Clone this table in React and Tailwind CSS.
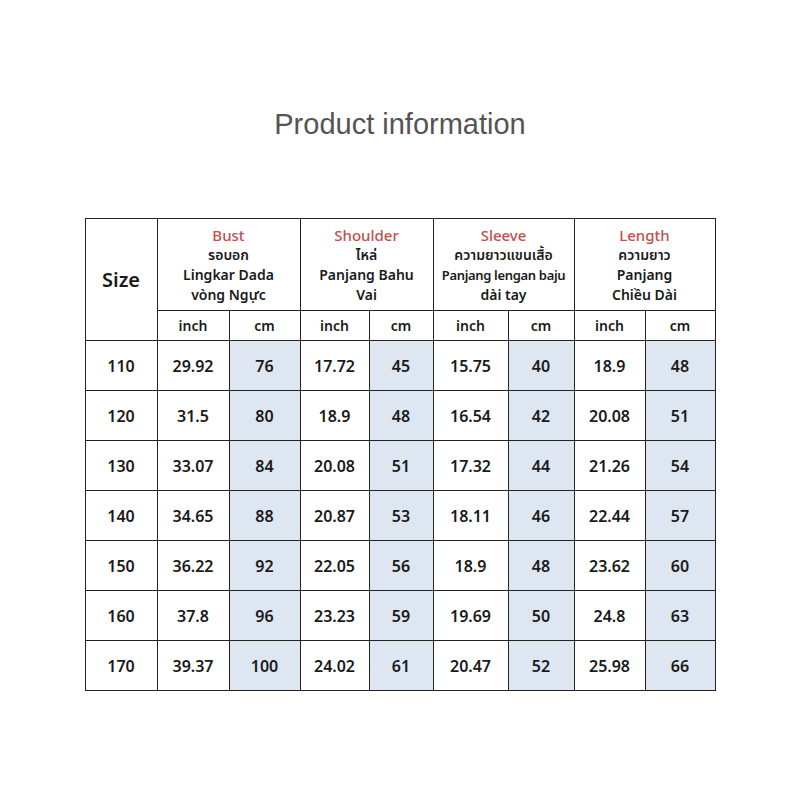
import React from 'react';

const groups = [
  { title: 'Bust', lines: ['รอบอก', 'Lingkar Dada', 'vòng Ngực'] },
  { title: 'Shoulder', lines: ['ไหล่', 'Panjang Bahu', 'Vai'] },
  { title: 'Sleeve', lines: ['ความยาวแขนเสื้อ', 'Panjang lengan baju', 'dài tay'] },
  { title: 'Length', lines: ['ความยาว', 'Panjang', 'Chiều Dài'] },
];

const rows = [
  ['110', '29.92', '76', '17.72', '45', '15.75', '40', '18.9', '48'],
  ['120', '31.5', '80', '18.9', '48', '16.54', '42', '20.08', '51'],
  ['130', '33.07', '84', '20.08', '51', '17.32', '44', '21.26', '54'],
  ['140', '34.65', '88', '20.87', '53', '18.11', '46', '22.44', '57'],
  ['150', '36.22', '92', '22.05', '56', '18.9', '48', '23.62', '60'],
  ['160', '37.8', '96', '23.23', '59', '19.69', '50', '24.8', '63'],
  ['170', '39.37', '100', '24.02', '61', '20.47', '52', '25.98', '66'],
];

const widths = [72, 72, 71, 69, 64, 75, 66, 71, 70];

function App() {
  return (
    <div className="w-[800px] h-[800px] bg-white flex flex-col items-center">
      <h1
        className="mt-[106px] text-[29px] leading-[36px] text-[#555353]"
        style={{ fontFamily: '"Liberation Sans", Arial, sans-serif' }}
      >
        Product information
      </h1>
      <table
        className="mt-[76px] border-collapse table-fixed text-[#1a1a1a]"
        style={{ fontFamily: '"Noto Sans", "Noto Sans Thai", "DejaVu Sans", sans-serif' }}
      >
        <colgroup>
          {widths.map((w, i) => (
            <col key={i} style={{ width: w }} />
          ))}
        </colgroup>
        <thead>
          <tr className="h-[92px]">
            <th rowSpan={2} className="border border-[#222] text-[20px] font-semibold">
              Size
            </th>
            {groups.map((g) => (
              <th key={g.title} colSpan={2} className="border border-[#222] p-0 align-middle">
                <div className="flex flex-col items-center text-[14px] leading-[20px] font-semibold">
                  <span className="text-[15px] font-medium text-[#c0504d]">{g.title}</span>
                  {g.lines.map((l) => (
                    <span key={l} className={l.length > 16 ? 'text-[13px] tracking-tight' : ''}>
                      {l}
                    </span>
                  ))}
                </div>
              </th>
            ))}
          </tr>
          <tr className="h-[30px]">
            {groups.map((g) => (
              <React.Fragment key={g.title}>
                <th className="border border-[#222] text-[14px] font-semibold">inch</th>
                <th className="border border-[#222] text-[14px] font-semibold">cm</th>
              </React.Fragment>
            ))}
          </tr>
        </thead>
        <tbody>
          {rows.map((r) => (
            <tr key={r[0]} className="h-[50px]">
              {r.map((v, i) => (
                <td
                  key={i}
                  className={
                    i > 0 && i % 2 === 0
                      ? 'border border-[#222] text-center text-[16px] font-semibold bg-[#dde6f1]'
                      : 'border border-[#222] text-center text-[16px] font-semibold'
                  }
                >
                  {v}
                </td>
              ))}
            </tr>
          ))}
        </tbody>
      </table>
    </div>
  );
}

export default App;
